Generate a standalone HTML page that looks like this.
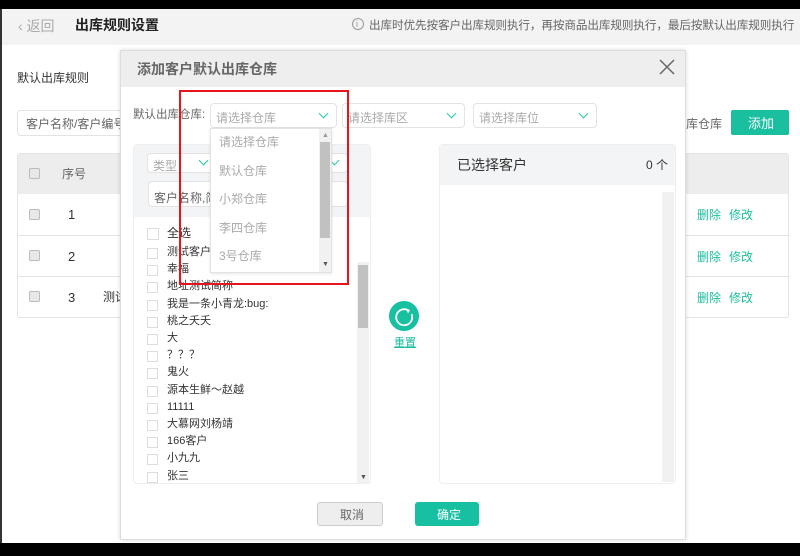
<!DOCTYPE html>
<html><head><meta charset="utf-8">
<style>
*{box-sizing:border-box;margin:0;padding:0}
body{width:800px;height:556px;background:#000;position:relative;overflow:hidden;font-family:"Liberation Sans","Noto Sans CJK SC",sans-serif;font-size:12px;color:#333}
.a{position:absolute}
.t{position:absolute;white-space:nowrap;line-height:1}
.cb{position:absolute;width:11px;height:11px;border:1px solid #bbb;border-radius:2px;background:#e8e8e8}
.sq{position:absolute;width:11px;height:11px;border:1px solid #ddd;background:#fff}
.sel{position:absolute;height:25px;border:1px solid #e3e3e3;border-radius:4px;background:#fff;color:#aaa;font-size:12px;padding:5px 0 0 5px}
.chev{position:absolute;right:9px;top:6px;width:7px;height:7px;border-right:1.5px solid #28c8a8;border-bottom:1.5px solid #28c8a8;transform:rotate(45deg)}
.teal{color:#1ebd9e}
</style></head><body>
<div class="a" style="left:0;top:9px;width:800px;height:534px;background:#fff;border-left:2px solid #333"></div>
<div class="a" style="left:2px;top:9px;width:798px;height:36px;background:#f3f3f3"></div>
<div class="t" style="left:18px;top:19px;font-size:14px;color:#aaa">&lsaquo; 返回</div>
<div class="t" style="left:75px;top:18px;font-size:14px;font-weight:bold;color:#222">出库规则设置</div>
<div class="a" style="left:352px;top:18px;width:12px;height:12px;border:1px solid #999;border-radius:50%"></div>
<div class="t" style="left:356px;top:20px;font-size:9px;color:#999">i</div>
<div class="t" style="left:369px;top:20px;color:#666;font-size:11.6px;letter-spacing:-0.1px">出库时优先按客户出库规则执行，再按商品出库规则执行，最后按默认出库规则执行</div>
<div class="t" style="left:17px;top:72px;color:#333">默认出库规则</div>
<div class="a" style="left:17px;top:110px;width:110px;height:26px;border:1px solid #e3e3e3;border-radius:4px"></div>
<div class="t" style="left:26px;top:118px;color:#666">客户名称/客户编号</div>
<div class="t" style="left:686px;top:118px;color:#666">库仓库</div>
<div class="a" style="left:731px;top:110px;width:58px;height:25px;background:#1abf9f;border-radius:2px"></div>
<div class="t" style="left:748px;top:117px;color:#fff;font-size:13px">添加</div>
<div class="a" style="left:17px;top:153px;width:772px;height:165px;border:1px solid #e4e4e4;border-radius:3px"></div>
<div class="a" style="left:18px;top:154px;width:770px;height:40px;background:#ededed"></div>
<div class="a" style="left:18px;top:235px;width:770px;height:1px;background:#e4e4e4"></div>
<div class="a" style="left:18px;top:276px;width:770px;height:1px;background:#e4e4e4"></div>
<div class="cb" style="left:29px;top:168px"></div>
<div class="t" style="left:62px;top:168px;color:#666">序号</div>
<div class="cb" style="left:29px;top:209px"></div><div class="t" style="left:68px;top:208px;font-size:13px">1</div>
<div class="cb" style="left:29px;top:250px"></div><div class="t" style="left:68px;top:250px;font-size:13px">2</div>
<div class="cb" style="left:29px;top:291px"></div><div class="t" style="left:68px;top:291px;font-size:13px">3</div>
<div class="t" style="left:103px;top:291px">测试</div>
<div class="t teal" style="left:697px;top:209px">删除</div><div class="t teal" style="left:729px;top:209px">修改</div>
<div class="t teal" style="left:697px;top:251px">删除</div><div class="t teal" style="left:729px;top:251px">修改</div>
<div class="t teal" style="left:697px;top:292px">删除</div><div class="t teal" style="left:729px;top:292px">修改</div>
<div class="a" style="left:120px;top:50px;width:566px;height:490px;background:#fff;border:1px solid #ddd;box-shadow:0 0 4px rgba(0,0,0,.15)"></div>
<div class="a" style="left:121px;top:51px;width:564px;height:36px;background:#eeeeee"></div>
<div class="t" style="left:137px;top:62px;font-size:14px;font-weight:bold;color:#666">添加客户默认出库仓库</div>
<svg class="a" style="left:659px;top:59px" width="16" height="16"><path d="M1 1L15 15M15 1L1 15" stroke="#666" stroke-width="1.5"/></svg>
<div class="t" style="left:133px;top:110px;color:#666;font-size:11.5px">默认出库仓库:</div>
<div class="sel" style="left:210px;top:103px;width:127px">请选择仓库<i class="chev"></i></div>
<div class="sel" style="left:342px;top:103px;width:123px">请选择库区<i class="chev"></i></div>
<div class="sel" style="left:473px;top:103px;width:124px">请选择库位<i class="chev"></i></div>
<div class="a" style="left:133px;top:144px;width:238px;height:340px;border:1px solid #eee;border-radius:4px;background:#fff"></div>
<div class="a" style="left:134px;top:145px;width:236px;height:72px;background:#f3f4f6"></div>
<div class="sel" style="left:147px;top:153px;width:70px;height:20px;padding-top:3px">类型<i class="chev" style="top:3px"></i></div>
<div class="sel" style="left:220px;top:153px;width:128px;height:20px"><i class="chev" style="top:3px"></i></div>
<div class="sel" style="left:148px;top:181px;width:200px;height:26px;color:#666;padding-top:7px">客户名称,简</div>
<div class="sq" style="left:147px;top:228px;width:12px;height:12px"></div>
<div class="t" style="left:167px;top:227px">全选</div>
<div id="list"></div>
<div class="a" style="left:357px;top:262px;width:12px;height:221px;background:#f1f1f1"></div>
<div class="a" style="left:358px;top:265px;width:10px;height:63px;background:#c1c1c1"></div>
<div class="t" style="left:360px;top:474px;font-size:7px;color:#555">▼</div>
<div class="a" style="left:389px;top:301px;width:30px;height:30px;border-radius:50%;background:#17c0a0"></div>
<svg class="a" style="left:389px;top:301px" width="30" height="30"><path d="M19.5 9.5A8 8 0 1 0 22.5 13" fill="none" stroke="#fff" stroke-width="1.8"/><path d="M17 7.5L21 9L19 12.5Z" fill="#fff"/></svg>
<div class="t teal" style="left:394px;top:338px;font-size:11px;text-decoration:underline">重置</div>
<div class="a" style="left:439px;top:144px;width:237px;height:340px;border:1px solid #eee;border-radius:4px"></div>
<div class="a" style="left:440px;top:145px;width:235px;height:40px;background:#f3f4f6"></div>
<div class="t" style="left:457px;top:158px;font-size:14px">已选择客户</div>
<div class="t" style="left:646px;top:159px;font-size:12px">0 个</div>
<div class="a" style="left:662px;top:192px;width:12px;height:290px;background:#f1f1f1"></div>
<div class="a" style="left:317px;top:502px;width:66px;height:24px;background:#eee;border:1px solid #ccc;border-radius:3px"></div>
<div class="t" style="left:340px;top:509px;color:#666">取消</div>
<div class="a" style="left:415px;top:502px;width:64px;height:24px;background:#17c0a0;border-radius:3px"></div>
<div class="t" style="left:437px;top:509px;color:#fff">确定</div>
<div class="a" style="left:210px;top:128px;width:122px;height:145px;background:#fff;border:1px solid #e3e3e3;box-shadow:0 1px 3px rgba(0,0,0,.1)"></div>
<div class="t" style="left:219px;top:136px;color:#aaa">请选择仓库</div>
<div class="t" style="left:219px;top:165px;color:#aaa">默认仓库</div>
<div class="t" style="left:219px;top:193px;color:#aaa">小郑仓库</div>
<div class="t" style="left:219px;top:222px;color:#aaa">李四仓库</div>
<div class="t" style="left:219px;top:250px;color:#aaa">3号仓库</div>
<div class="a" style="left:319px;top:129px;width:12px;height:143px;background:#f1f1f1"></div>
<div class="a" style="left:320px;top:142px;width:10px;height:96px;background:#c1c1c1"></div>
<div class="t" style="left:322px;top:261px;font-size:7px;color:#555">▼</div>
<div class="t" style="left:322px;top:132px;font-size:7px;color:#999">▲</div>
<div class="a" style="left:179px;top:90px;width:170px;height:195px;border:2px solid #e8141b"></div>
<script>
var items=["测试客户","幸福","地址测试简称","我是一条小青龙:bug:","桃之夭夭","大","？？？","鬼火","源本生鲜～赵越","11111","大慕网刘杨靖","166客户","小九九","张三"];
var h="";items.forEach(function(s,i){var y=248+i*17.2;h+='<div class="sq" style="left:147px;top:'+(y)+'px"></div><div class="t" style="left:167px;top:'+(y-1)+'px;font-size:11px">'+s+'</div>';});
document.getElementById("list").innerHTML=h;
</script>
</body></html>
